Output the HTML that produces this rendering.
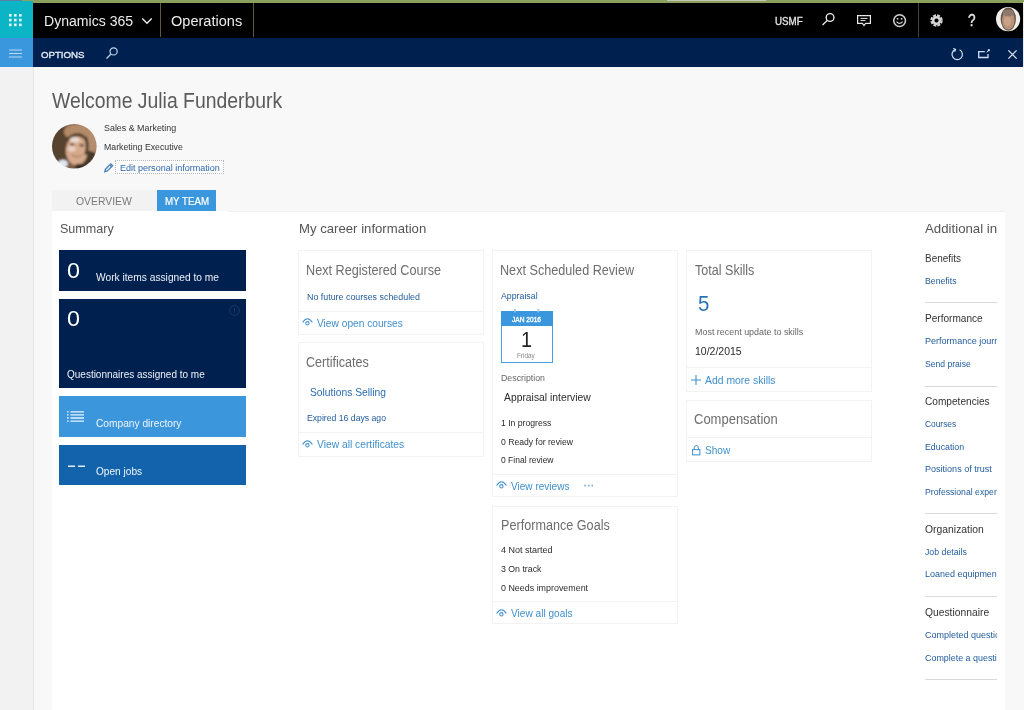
<!DOCTYPE html>
<html lang="en">
<head>
<meta charset="utf-8">
<title>Dynamics 365 Operations - Welcome Julia Funderburk</title>
<style>
*{box-sizing:border-box;margin:0;padding:0}
html,body{width:1024px;height:710px;overflow:hidden}
body{position:relative;background:#f8f8f8;font-family:'Liberation Sans',sans-serif}
.a{position:absolute}
.t{position:absolute;white-space:pre;line-height:1;transform-origin:0 0;display:block;filter:blur(.35px)}
.card{position:absolute;background:#fff;border:1px solid #f3f3f3}
.div{position:absolute;height:1px;background:#f3f3f3}
.rdiv{position:absolute;left:925px;width:72px;height:1px;background:#d9d9d9}
svg{position:absolute;overflow:visible}
</style>
</head>
<body>
<!-- chrome -->
<div class="a" style="left:0;top:0;width:22px;height:2px;background:#5f7fa8"></div>
<div class="a" style="left:22px;top:0;width:1002px;height:3px;background:#8ba05e"></div>
<div class="a" style="left:667px;top:0;width:99px;height:1px;background:#c4c8bc"></div>
<div class="a" style="left:33px;top:2.5px;width:991px;height:35px;background:#000"></div>
<div class="a" style="left:0;top:1px;width:33px;height:36.5px;background:#0cb5c6"></div>
<div class="a" style="left:33px;top:37.5px;width:991px;height:29.5px;background:#002050"></div>
<div class="a" style="left:0;top:37.5px;width:33px;height:29.5px;background:#3a96dd"></div>
<div class="a" style="left:0;top:67px;width:33.5px;height:643px;background:#f2f2f2;border-right:1px solid #e6e6e6"></div>
<div class="a" style="left:159.5px;top:3px;width:1px;height:34px;background:#5d5a3c"></div>
<div class="a" style="left:253px;top:3px;width:1px;height:34px;background:#5d5a3c"></div>
<div class="a" style="left:917.5px;top:3px;width:1px;height:34px;background:#3c4a3c"></div>

<div class="a" style="left:1023px;top:2px;width:1px;height:65px;background:#e8eaee"></div>
<!-- white content panel -->
<div class="a" style="left:52px;top:211px;width:953px;height:499px;background:#fff"></div>
<div class="a" style="left:228px;top:211px;width:777px;height:1px;background:#f0f0f0"></div>
<!-- tabs -->
<div class="a" style="left:52px;top:189.5px;width:105px;height:21.5px;background:#f2f2f2"></div>
<div class="a" style="left:157px;top:189.5px;width:59px;height:21.5px;background:#3a96dd"></div>

<!-- tiles -->
<div class="a" style="left:59.4px;top:250px;width:186.6px;height:41px;background:#002050"></div>
<div class="a" style="left:59.4px;top:299.2px;width:186.6px;height:88.8px;background:#002050"></div>
<div class="a" style="left:59.4px;top:396.4px;width:186.6px;height:40.6px;background:#3b96dc"></div>
<div class="a" style="left:59.4px;top:445px;width:186.6px;height:40px;background:#1263ab"></div>

<!-- cards -->
<div class="card" style="left:298px;top:250px;width:186px;height:85px"></div>
<div class="div" style="left:299px;top:311px;width:184px"></div>
<div class="card" style="left:298px;top:342px;width:186px;height:115px"></div>
<div class="div" style="left:299px;top:432px;width:184px"></div>
<div class="card" style="left:492.4px;top:250px;width:186px;height:247px"></div>
<div class="div" style="left:493px;top:474px;width:184px"></div>
<div class="card" style="left:686px;top:250px;width:186px;height:142px"></div>
<div class="div" style="left:687px;top:367.4px;width:184px"></div>
<div class="card" style="left:686px;top:399.6px;width:186px;height:62px"></div>
<div class="div" style="left:687px;top:437px;width:184px"></div>
<div class="card" style="left:492.4px;top:505.6px;width:186px;height:118.6px"></div>
<div class="div" style="left:493px;top:601.4px;width:184px"></div>

<!-- calendar -->
<div class="a" style="left:500.6px;top:311px;width:52px;height:52.4px;background:#fff;border:1px solid #4a9fe0"></div>
<div class="a" style="left:500.6px;top:311px;width:52px;height:15.4px;background:#3a96dd"></div>

<!-- edit button -->
<div class="a" style="left:115.4px;top:160px;width:109px;height:14.4px;border:1px dotted #b4b8bc;background:#fdfdfd"></div>

<!-- avatar -->
<svg style="left:52px;top:123.8px" width="44.6" height="44.6" viewBox="0 0 45 45">
 <defs><clipPath id="av"><circle cx="22.5" cy="22.5" r="22.5"/></clipPath>
 <filter id="bl" x="-10%" y="-10%" width="120%" height="120%"><feGaussianBlur stdDeviation="0.85"/></filter></defs>
 <g clip-path="url(#av)"><g filter="url(#bl)">
  <rect x="-3" y="-3" width="51" height="51" fill="#7b5d47"/>
  <ellipse cx="9" cy="22" rx="12" ry="20" fill="#56422f"/>
  <ellipse cx="27" cy="8" rx="15" ry="8" fill="#b48b69"/>
  <ellipse cx="40" cy="20" rx="6" ry="12" fill="#b58d6f"/>
  <ellipse cx="38" cy="36" rx="8" ry="9" fill="#4a382b"/>
  <path d="M13 20Q16 9 26 9Q36 10 36 20Q35 14 26 13Q17 14 13 20Z" fill="#54412f"/>
  <ellipse cx="25" cy="27" rx="11" ry="14.5" fill="#d6aa8c"/>
  <ellipse cx="23" cy="16" rx="5" ry="3" fill="#ead9d2"/>
  <ellipse cx="20" cy="25" rx="4" ry="3" fill="#e6cfc2"/>
  <path d="M34 13Q37 22 34 31" stroke="#4e3c2e" stroke-width="3" fill="none"/>
  <ellipse cx="20.5" cy="20.5" rx="2.2" ry="1.2" fill="#4a382b"/>
  <ellipse cx="30" cy="21.5" rx="2.2" ry="1.2" fill="#4a382b"/>
  <path d="M20 31Q25 35 31 31" stroke="#a87a60" stroke-width="1.4" fill="none"/>
  <ellipse cx="11" cy="40" rx="5" ry="4" fill="#dfe8f2"/>
  <ellipse cx="28" cy="43" rx="5" ry="3" fill="#3a2c22"/>
 </g></g>
</svg>
<svg style="left:995.8px;top:6.5px" width="24.2" height="24.2" viewBox="0 0 24 24">
 <defs><clipPath id="av2"><circle cx="12" cy="12" r="12"/></clipPath><filter id="bl2"><feGaussianBlur stdDeviation="0.5"/></filter></defs>
 <circle cx="12" cy="12" r="12" fill="#f1efec"/>
 <g clip-path="url(#av2)" filter="url(#bl2)">
  <ellipse cx="12.2" cy="12" rx="7.6" ry="11.6" fill="#6b5646"/>
  <ellipse cx="12.2" cy="13" rx="6.2" ry="9.6" fill="#b8927a"/>
  <ellipse cx="12.2" cy="6" rx="5.5" ry="3.4" fill="#8d7a6c"/>
  <ellipse cx="11.5" cy="14" rx="3.6" ry="4.6" fill="#c9a186"/>
 </g>
</svg>

<!-- text -->
<span class="t" style="left:44.0px;top:12.71px;font-size:15.2px;color:#ececec;font-weight:400;transform:scaleX(0.927)">Dynamics 365</span>
<span class="t" style="left:171.0px;top:12.71px;font-size:15.2px;color:#ececec;font-weight:400;transform:scaleX(0.958)">Operations</span>
<span class="t" style="left:775.4px;top:16.90px;font-size:10.2px;color:#e0e0e0;font-weight:400;-webkit-text-stroke:0.35px #e0e0e0;transform:scaleX(0.956)">USMF</span>
<span class="t" style="left:968.2px;top:13.20px;font-size:16px;color:#e6e6e6;font-weight:400;-webkit-text-stroke:0.35px #e6e6e6;transform:scaleX(0.853)">?</span>
<span class="t" style="left:41.0px;top:50.21px;font-size:9.9px;color:#e6ecf5;font-weight:400;-webkit-text-stroke:0.35px #e6ecf5;transform:scaleX(0.979)">OPTIONS</span>
<span class="t" style="left:52.2px;top:89.61px;font-size:21.2px;color:#5a5a5a;font-weight:400;transform:scaleX(0.915)">Welcome Julia Funderburk</span>
<span class="t" style="left:104.3px;top:123.11px;font-size:9.7px;color:#333;font-weight:400;transform:scaleX(0.918)">Sales &amp; Marketing</span>
<span class="t" style="left:104.3px;top:142.40px;font-size:9.7px;color:#333;font-weight:400;transform:scaleX(0.904)">Marketing Executive</span>
<span class="t" style="left:120.1px;top:163.40px;font-size:9.7px;color:#2b67ab;font-weight:400;transform:scaleX(0.932)">Edit personal information</span>
<span class="t" style="left:76.0px;top:196.26px;font-size:10.6px;color:#7a7a7a;font-weight:400;transform:scaleX(0.982)">OVERVIEW</span>
<span class="t" style="left:164.5px;top:197.26px;font-size:10.4px;color:#fff;font-weight:400;-webkit-text-stroke:0.2px #fff;transform:scaleX(0.937)">MY TEAM</span>
<span class="t" style="left:59.7px;top:222.30px;font-size:13px;color:#555;font-weight:400;transform:scaleX(0.965)">Summary</span>
<span class="t" style="left:298.5px;top:222.10px;font-size:13px;color:#555;font-weight:400;transform:scaleX(1.012)">My career information</span>
<span class="t" style="left:66.6px;top:259.81px;font-size:22px;color:#fff;font-weight:400;transform:scaleX(1.061)">0</span>
<span class="t" style="left:96.1px;top:271.60px;font-size:10.6px;color:#eef1f6;font-weight:400;transform:scaleX(0.964)">Work items assigned to me</span>
<span class="t" style="left:66.6px;top:307.81px;font-size:22px;color:#fff;font-weight:400;transform:scaleX(1.061)">0</span>
<span class="t" style="left:67.0px;top:368.60px;font-size:10.6px;color:#eef1f6;font-weight:400;transform:scaleX(0.943)">Questionnaires assigned to me</span>
<span class="t" style="left:96.4px;top:417.51px;font-size:10.6px;color:#eef5fc;font-weight:400;transform:scaleX(0.961)">Company directory</span>
<span class="t" style="left:96.4px;top:465.51px;font-size:10.6px;color:#eef5fc;font-weight:400;transform:scaleX(0.955)">Open jobs</span>
<span class="t" style="left:306.4px;top:263.21px;font-size:14px;color:#6e6e6e;font-weight:400;transform:scaleX(0.904)">Next Registered Course</span>
<span class="t" style="left:307.0px;top:292.51px;font-size:9.2px;color:#1f5a9a;font-weight:400;transform:scaleX(0.966)">No future courses scheduled</span>
<span class="t" style="left:317.0px;top:317.80px;font-size:10.8px;color:#3f8fcc;font-weight:400;transform:scaleX(0.943)">View open courses</span>
<span class="t" style="left:306.4px;top:355.31px;font-size:14px;color:#6e6e6e;font-weight:400;transform:scaleX(0.898)">Certificates</span>
<span class="t" style="left:310.0px;top:386.51px;font-size:10.6px;color:#2a6db0;font-weight:400;transform:scaleX(0.970)">Solutions Selling</span>
<span class="t" style="left:307.0px;top:414.40px;font-size:9.2px;color:#1f5a9a;font-weight:400;transform:scaleX(0.943)">Expired 16 days ago</span>
<span class="t" style="left:317.0px;top:438.80px;font-size:10.8px;color:#3f8fcc;font-weight:400;transform:scaleX(0.952)">View all certificates</span>
<span class="t" style="left:500.3px;top:263.21px;font-size:14px;color:#6e6e6e;font-weight:400;transform:scaleX(0.902)">Next Scheduled Review</span>
<span class="t" style="left:500.9px;top:292.31px;font-size:9.2px;color:#1f5a9a;font-weight:400;transform:scaleX(0.955)">Appraisal</span>
<span class="t" style="left:512.0px;top:315.62px;font-size:7px;color:#fff;font-weight:400;-webkit-text-stroke:0.35px #fff;transform:scaleX(0.943)">JAN 2016</span>
<span class="t" style="left:520.7px;top:329.02px;font-size:22.5px;color:#222;font-weight:400;transform:scaleX(0.879)">1</span>
<span class="t" style="left:517.3px;top:352.01px;font-size:7px;color:#888;font-weight:400;transform:scaleX(0.905)">Friday</span>
<span class="t" style="left:500.9px;top:372.91px;font-size:9.4px;color:#666;font-weight:400;transform:scaleX(0.938)">Description</span>
<span class="t" style="left:504.4px;top:391.50px;font-size:11.2px;color:#2b2b2b;font-weight:400;transform:scaleX(0.924)">Appraisal interview</span>
<span class="t" style="left:500.9px;top:417.51px;font-size:9.5px;color:#2b2b2b;font-weight:400;transform:scaleX(0.909)">1 In progress</span>
<span class="t" style="left:500.9px;top:436.90px;font-size:9.5px;color:#2b2b2b;font-weight:400;transform:scaleX(0.908)">0 Ready for review</span>
<span class="t" style="left:500.9px;top:455.40px;font-size:9.5px;color:#2b2b2b;font-weight:400;transform:scaleX(0.896)">0 Final review</span>
<span class="t" style="left:511.1px;top:480.50px;font-size:10.8px;color:#3f8fcc;font-weight:400;transform:scaleX(0.931)">View reviews</span>
<span class="t" style="left:583.3px;top:480.30px;font-size:11px;color:#6aa9d8;font-weight:400;-webkit-text-stroke:0.35px #6aa9d8;transform:scaleX(1.000)">···</span>
<span class="t" style="left:694.7px;top:262.90px;font-size:14px;color:#6e6e6e;font-weight:400;transform:scaleX(0.897)">Total Skills</span>
<span class="t" style="left:697.8px;top:294.31px;font-size:21.5px;color:#2a72b5;font-weight:400;transform:scaleX(0.952)">5</span>
<span class="t" style="left:694.7px;top:327.81px;font-size:9.3px;color:#666;font-weight:400;transform:scaleX(0.961)">Most recent update to skills</span>
<span class="t" style="left:694.7px;top:345.50px;font-size:11px;color:#2b2b2b;font-weight:400;transform:scaleX(0.954)">10/2/2015</span>
<span class="t" style="left:704.7px;top:375.30px;font-size:10.8px;color:#3f8fcc;font-weight:400;transform:scaleX(0.963)">Add more skills</span>
<span class="t" style="left:694.2px;top:412.01px;font-size:14px;color:#6e6e6e;font-weight:400;transform:scaleX(0.928)">Compensation</span>
<span class="t" style="left:704.7px;top:444.91px;font-size:10.8px;color:#3f8fcc;font-weight:400;transform:scaleX(0.933)">Show</span>
<span class="t" style="left:500.6px;top:518.01px;font-size:14px;color:#6e6e6e;font-weight:400;transform:scaleX(0.902)">Performance Goals</span>
<span class="t" style="left:500.6px;top:544.61px;font-size:9.5px;color:#2b2b2b;font-weight:400;transform:scaleX(0.945)">4 Not started</span>
<span class="t" style="left:500.6px;top:563.90px;font-size:9.5px;color:#2b2b2b;font-weight:400;transform:scaleX(0.922)">3 On track</span>
<span class="t" style="left:500.6px;top:583.31px;font-size:9.5px;color:#2b2b2b;font-weight:400;transform:scaleX(0.937)">0 Needs improvement</span>
<span class="t" style="left:511.1px;top:608.41px;font-size:10.8px;color:#3f8fcc;font-weight:400;transform:scaleX(0.937)">View all goals</span>
<div class="a" style="left:0;top:0;width:997px;height:710px;overflow:hidden">
<span class="t" style="left:925.0px;top:221.71px;font-size:13px;color:#555;font-weight:400;transform:scaleX(1.019)">Additional in</span>
<span class="t" style="left:925.2px;top:252.71px;font-size:10.6px;color:#333;font-weight:400;transform:scaleX(0.938)">Benefits</span>
<span class="t" style="left:925.2px;top:276.70px;font-size:9.3px;color:#1f5a9a;font-weight:400;transform:scaleX(0.938)">Benefits</span>
<span class="t" style="left:925.2px;top:312.60px;font-size:10.6px;color:#333;font-weight:400;transform:scaleX(0.950)">Performance</span>
<span class="t" style="left:925.2px;top:337.41px;font-size:9.3px;color:#1f5a9a;font-weight:400;transform:scaleX(0.972)">Performance journal</span>
<span class="t" style="left:925.2px;top:360.00px;font-size:9.3px;color:#1f5a9a;font-weight:400;transform:scaleX(0.923)">Send praise</span>
<span class="t" style="left:925.2px;top:396.41px;font-size:10.6px;color:#333;font-weight:400;transform:scaleX(0.954)">Competencies</span>
<span class="t" style="left:925.2px;top:420.20px;font-size:9.3px;color:#1f5a9a;font-weight:400;transform:scaleX(0.901)">Courses</span>
<span class="t" style="left:925.2px;top:442.81px;font-size:9.3px;color:#1f5a9a;font-weight:400;transform:scaleX(0.945)">Education</span>
<span class="t" style="left:925.2px;top:465.31px;font-size:9.3px;color:#1f5a9a;font-weight:400;transform:scaleX(0.972)">Positions of trust</span>
<span class="t" style="left:925.2px;top:487.61px;font-size:9.3px;color:#1f5a9a;font-weight:400;transform:scaleX(0.932)">Professional experience</span>
<span class="t" style="left:925.2px;top:523.91px;font-size:10.6px;color:#333;font-weight:400;transform:scaleX(0.979)">Organization</span>
<span class="t" style="left:925.2px;top:548.41px;font-size:9.3px;color:#1f5a9a;font-weight:400;transform:scaleX(0.940)">Job details</span>
<span class="t" style="left:925.2px;top:570.41px;font-size:9.3px;color:#1f5a9a;font-weight:400;transform:scaleX(0.965)">Loaned equipment</span>
<span class="t" style="left:925.2px;top:606.80px;font-size:10.6px;color:#333;font-weight:400;transform:scaleX(0.972)">Questionnaire</span>
<span class="t" style="left:925.2px;top:631.11px;font-size:9.3px;color:#1f5a9a;font-weight:400;transform:scaleX(0.969)">Completed questionnaires</span>
<span class="t" style="left:925.2px;top:653.70px;font-size:9.3px;color:#1f5a9a;font-weight:400;transform:scaleX(0.958)">Complete a questionnaire</span>
</div>
<div class="rdiv" style="top:302.4px"></div>
<div class="rdiv" style="top:385.6px"></div>
<div class="rdiv" style="top:513px"></div>
<div class="rdiv" style="top:596.4px"></div>
<div class="rdiv" style="top:679px"></div>

<!-- icons -->
<!-- waffle -->
<svg style="left:9.2px;top:14.2px" width="12.6" height="12.2" viewBox="0 0 12.6 12.2" fill="#e4f6f8">
 <rect x="0" y="0" width="2.6" height="2.6"/><rect x="5" y="0" width="2.6" height="2.6"/><rect x="10" y="0" width="2.6" height="2.6"/>
 <rect x="0" y="4.8" width="2.6" height="2.6"/><rect x="5" y="4.8" width="2.6" height="2.6"/><rect x="10" y="4.8" width="2.6" height="2.6"/>
 <rect x="0" y="9.6" width="2.6" height="2.6"/><rect x="5" y="9.6" width="2.6" height="2.6"/><rect x="10" y="9.6" width="2.6" height="2.6"/>
</svg>
<!-- hamburger -->
<svg style="left:9px;top:49px" width="13" height="9" viewBox="0 0 13 9" stroke="#b9d8f2" stroke-width="1">
 <path d="M0 1H13M0 4.5H13M0 8H13"/>
</svg>
<!-- chevron -->
<svg style="left:142px;top:17.5px" width="10" height="6" viewBox="0 0 10 6" fill="none" stroke="#eee" stroke-width="1.4"><path d="M0.3 0.5L5 5.2L9.7 0.5"/></svg>
<!-- search (navy bar) -->
<svg style="left:106px;top:47px" width="12" height="12" viewBox="0 0 12 12" fill="none" stroke="#c4d6ec" stroke-width="1.2"><circle cx="7.6" cy="4.4" r="3.6"/><path d="M5 7L0.5 11.5"/></svg>
<!-- search (top bar) -->
<svg style="left:822.3px;top:12.9px" width="12.6" height="12.6" viewBox="0 0 13 13" fill="none" stroke="#eee" stroke-width="1.4"><circle cx="8.3" cy="4.7" r="4"/><path d="M5.4 7.6L0.6 12.4"/></svg>
<!-- message -->
<svg style="left:857px;top:15px" width="14" height="11.5" viewBox="0 0 14 11.5" fill="none" stroke="#e8e8e8" stroke-width="1.2"><path d="M0.6 0.6H13.4V8.4H8.6L7 10.6L5.4 8.4H0.6Z"/><path d="M3.5 3.4H10.5M3.5 5.6H8.5" stroke-width="1"/></svg>
<!-- smiley -->
<svg style="left:893.1px;top:13.5px" width="13.2" height="13.2" viewBox="0 0 13 13" fill="none" stroke="#d2d2d2" stroke-width="1.5"><circle cx="6.5" cy="6.5" r="5.8"/><path d="M3.5 7.6Q6.5 11 9.5 7.6" stroke-width="1.2"/><circle cx="4.5" cy="4.8" r="0.95" fill="#d2d2d2" stroke="none"/><circle cx="8.5" cy="4.8" r="0.95" fill="#d2d2d2" stroke="none"/></svg>
<!-- gear -->
<svg style="left:929.8px;top:13.7px" width="13" height="13" viewBox="0 0 13 13" fill="none" stroke="#d4d4d4"><circle cx="6.5" cy="6.5" r="5.1" stroke-width="2.2" stroke-dasharray="2.9 1.1"/><circle cx="6.5" cy="6.5" r="3.3" stroke-width="2.5"/></svg>
<!-- refresh -->
<svg style="left:951px;top:48px" width="12.4" height="12.4" viewBox="0 0 12.4 12.4" fill="none" stroke="#cfe0f5" stroke-width="1.2"><path d="M4.2 1.6A5.2 5.2 0 1 0 8.6 1.8"/><path d="M2.2 0.6L4.6 1.4L3.6 3.8" stroke-width="1.1"/></svg>
<!-- popout -->
<svg style="left:978.3px;top:49.4px" width="12.4" height="9" viewBox="0 0 12.4 9" fill="none" stroke="#cfe0f5" stroke-width="1.3"><path d="M6.8 2.6H0.7V8.5H10V5"/><path d="M8.6 3.4L10.6 1.4" stroke-width="1"/><rect x="9.8" y="0.2" width="2" height="2" fill="#dbe8f8" stroke="none"/></svg>
<!-- close -->
<svg style="left:1007.7px;top:50px" width="9" height="9" viewBox="0 0 9 9" fill="none" stroke="#dce8f7" stroke-width="1.3"><path d="M0.4 0.4L8.6 8.6M8.6 0.4L0.4 8.6"/></svg>
<!-- pencil -->
<svg style="left:104px;top:162.5px" width="9.5" height="9.5" viewBox="0 0 9.5 9.5" fill="none" stroke="#4a80ba" stroke-width="1.3"><path d="M0.8 8.7L1.5 6.2L6.8 0.9L8.6 2.7L3.3 8L0.8 8.7Z"/><path d="M5.8 1.9L7.6 3.7"/></svg>
<!-- eye icons -->
<!-- lock -->
<svg style="left:691.5px;top:444.5px" width="8.5" height="10.5" viewBox="0 0 8.5 10.5" fill="none" stroke="#3f8fcc" stroke-width="1"><rect x="0.6" y="4.6" width="7.3" height="5.3"/><path d="M2.2 4.6V2.6A2 2 0 0 1 6.3 2.6V4.6"/></svg>
<!-- tile icons -->
<svg style="left:66.5px;top:410.5px" width="17" height="12" viewBox="0 0 17 12" stroke="#eaf3fb" stroke-width="1.3"><path d="M3.4 0.9H17M3.4 3.95H17M3.4 7H17M3.4 10.05H17"/><path d="M0 0.9H1.6M0 3.95H1.6M0 7H1.6M0 10.05H1.6"/></svg>
<svg style="left:67.5px;top:465px" width="17" height="3" viewBox="0 0 17 3" stroke="#e4eef8" stroke-width="1.6"><path d="M0 1.3H7M10 1.3H17"/></svg>
<!-- info circle (faint) -->
<svg style="left:229px;top:305px" width="11" height="11" viewBox="0 0 11 11" fill="none" stroke="#1f3a66" stroke-width="1"><circle cx="5.5" cy="5.5" r="4.8"/><path d="M5.5 3V6.4M5.5 7.6V8.4"/></svg>
<!-- calendar rings -->
<svg style="left:513.6px;top:309px" width="26" height="4" viewBox="0 0 26 4" fill="#9cc8ee"><rect x="0" y="0" width="1.8" height="3.4"/><rect x="23.4" y="0" width="1.8" height="3.4"/></svg>
<!-- plus -->
<svg style="left:690.6px;top:375.4px" width="10" height="10" viewBox="0 0 10 10" stroke="#3f8fcc" stroke-width="1.1"><path d="M5 0V10M0 5H10"/></svg>
<svg class="eye" style="left:302.2px;top:318px" width="11" height="8" viewBox="0 0 11 8" fill="none" stroke="#3f8fcc" stroke-width="1.05"><path d="M0.6 4.5Q5.5 -3.2 10.4 4.5"/><circle cx="5.4" cy="5.3" r="1.7"/></svg>
<svg class="eye" style="left:302.2px;top:439.9px" width="11" height="8" viewBox="0 0 11 8" fill="none" stroke="#3f8fcc" stroke-width="1.05"><path d="M0.6 4.5Q5.5 -3.2 10.4 4.5"/><circle cx="5.4" cy="5.3" r="1.7"/></svg>
<svg class="eye" style="left:496.3px;top:481.3px" width="11" height="8" viewBox="0 0 11 8" fill="none" stroke="#3f8fcc" stroke-width="1.05"><path d="M0.6 4.5Q5.5 -3.2 10.4 4.5"/><circle cx="5.4" cy="5.3" r="1.7"/></svg>
<svg class="eye" style="left:496.3px;top:609.1px" width="11" height="8" viewBox="0 0 11 8" fill="none" stroke="#3f8fcc" stroke-width="1.05"><path d="M0.6 4.5Q5.5 -3.2 10.4 4.5"/><circle cx="5.4" cy="5.3" r="1.7"/></svg>

</body>
</html>
